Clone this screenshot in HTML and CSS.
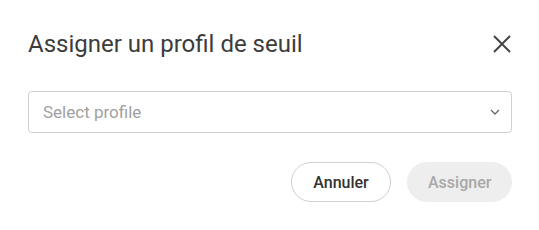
FILE: index.html
```html
<!DOCTYPE html>
<html lang="fr">
<head>
<meta charset="utf-8">
<link rel="stylesheet" href="styles.css">
</head>
<body>
<div class="dialog">
  <div class="header">
    <h2 class="title">Assigner un profil de seuil</h2>
    <button class="close" aria-label="Fermer">
      <svg width="20" height="20" viewBox="0 0 20 20"><path d="M2 2 L18 18 M18 2 L2 18" stroke="#444" stroke-width="2" fill="none"/></svg>
    </button>
  </div>
  <div class="select">
    <span class="placeholder">Select profile</span>
    <svg class="chevron" width="10" height="6" viewBox="0 0 10 6"><path d="M1 1 L5 5 L9 1" stroke="#666" stroke-width="1.3" fill="none"/></svg>
  </div>
  <div class="actions">
    <button class="btn btn-cancel">Annuler</button>
    <button class="btn btn-assign" disabled>Assigner</button>
  </div>
</div>
</body>
</html>
```

FILE: styles.css
```css
* { box-sizing: border-box; }
html, body { margin: 0; padding: 0; background: #fff; }
body { font-family: Roboto, "Noto Sans", sans-serif; width: 539px; height: 230px; overflow: hidden; }
.dialog { padding: 28px 27px 0 28px; }
.header { display: flex; justify-content: space-between; align-items: center; height: 32px; }
.title { margin: 0; font-size: 24px; font-weight: 400; line-height: 32px; color: #3c3c3c; }
.close { border: 0; background: none; padding: 0; margin-right: 0; width: 20px; height: 20px; display: flex; }
.select { margin-top: 31px; height: 42px; border: 1px solid #d0d0d0; border-radius: 4px; display: flex; align-items: center; justify-content: space-between; padding: 0 11px 0 14px; }
.placeholder { font-size: 17px; color: #a0a0a0; }
.chevron { display: block; }
.actions { margin-top: 29px; display: flex; justify-content: flex-end; gap: 16px; }
.btn { height: 40px; border-radius: 20px; font-family: Roboto, sans-serif; font-size: 16px; font-weight: 500; padding: 0 20px; }
.btn-cancel { width: 100px; background: #fff; border: 1px solid #cfcfcf; color: #333; }
.btn-assign { width: 105px; background: #eeeeee; border: 1px solid #eeeeee; color: #a8a8a8; }
```
